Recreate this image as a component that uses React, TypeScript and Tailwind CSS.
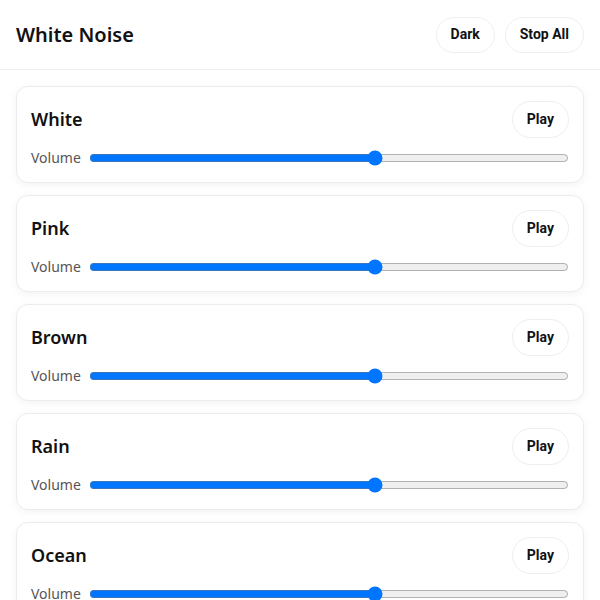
import { useState } from 'react'

const SOUNDS = ['White', 'Pink', 'Brown', 'Rain', 'Ocean', 'Fan']

function SoundCard({ name }: { name: string }) {
  const [vol, setVol] = useState(60)
  const [playing, setPlaying] = useState(false)
  return (
    <section className="rounded-xl border border-[#ececec] bg-white p-3.5 shadow-[0_2px_8px_rgba(0,0,0,0.05)]">
      <div className="flex items-center justify-between">
        <h2 className="text-[18px] font-semibold text-[#111]">{name}</h2>
        <button
          onClick={() => setPlaying(!playing)}
          className="h-[37px] rounded-full border border-[#eeeeee] bg-white px-[14px] font-['Roboto',sans-serif] text-[14px] font-bold text-[#111]"
        >
          {playing ? 'Stop' : 'Play'}
        </button>
      </div>
      <div className="mt-[9px] flex items-center gap-2">
        <label className="text-[14px] text-[#555]">Volume</label>
        <input
          type="range" min={0} max={100} value={vol}
          onChange={(e) => setVol(Number(e.target.value))}
          aria-label={`${name} volume`}
          className="h-5 flex-1 accent-[#0075ff]"
        />
      </div>
    </section>
  )
}

export default function App() {
  return (
    <div className="min-h-screen bg-white font-['Noto_Sans',sans-serif] text-[#111]">
      <header className="flex h-[70px] items-center justify-between border-b border-[#efefef] px-4">
        <h1 className="text-[20px] font-semibold">White Noise</h1>
        <div className="flex gap-[10px] font-['Roboto',sans-serif] text-[14px] font-bold">
          <button className="h-9 rounded-full border border-[#eeeeee] bg-white px-[14px]">Dark</button>
          <button className="h-9 rounded-full border border-[#eeeeee] bg-white px-[14px]">Stop All</button>
        </div>
      </header>
      <main className="flex flex-col gap-3 p-4">
        {SOUNDS.map((s) => <SoundCard key={s} name={s} />)}
      </main>
    </div>
  )
}
